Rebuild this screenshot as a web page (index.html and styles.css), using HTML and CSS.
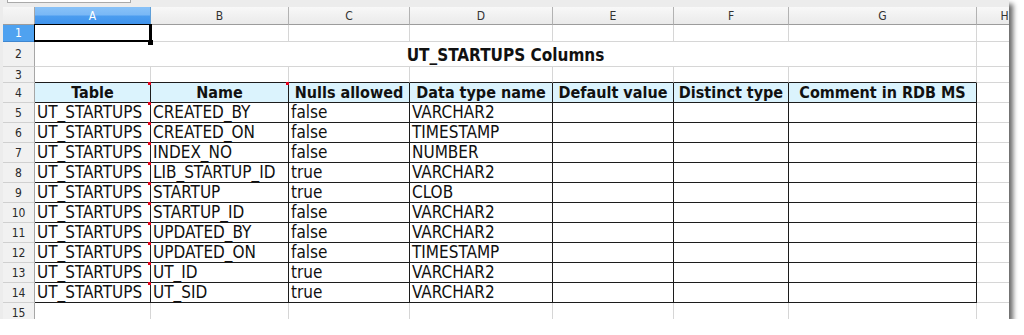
FILE: index.html
```html
<!DOCTYPE html>
<html>
<head>
<meta charset="utf-8">
<link rel="stylesheet" href="styles.css">
</head>
<body>
<div class="window">
  <div class="toolbar"><div class="namebox"></div></div>
  <div class="sheet">
    <div class="corner"></div>
    <div class="ch sel">A</div><div class="ch">B</div><div class="ch">C</div><div class="ch">D</div><div class="ch">E</div><div class="ch">F</div><div class="ch">G</div><div class="ch">H</div>

    <div class="rh sel">1</div>
    <div class="c a1"></div><div class="c"></div><div class="c"></div><div class="c"></div><div class="c"></div><div class="c"></div><div class="c"></div><div class="c"></div>

    <div class="rh">2</div>
    <div class="c title">UT_STARTUPS Columns</div><div class="c"></div>

    <div class="rh">3</div>
    <div class="c above"></div><div class="c above"></div><div class="c above"></div><div class="c above"></div><div class="c above"></div><div class="c above"></div><div class="c above"></div><div class="c"></div>

    <div class="rh">4</div>
    <div class="c t th note">Table</div><div class="c t th note">Name</div><div class="c t th">Nulls allowed</div><div class="c t th">Data type name</div><div class="c t th">Default value</div><div class="c t th">Distinct type</div><div class="c t th">Comment in RDB MS</div><div class="c"></div>

    <div class="rh">5</div>
    <div class="c t note">UT_STARTUPS</div><div class="c t">CREATED_BY</div><div class="c t">false</div><div class="c t">VARCHAR2</div><div class="c t"></div><div class="c t"></div><div class="c t"></div><div class="c"></div>

    <div class="rh">6</div>
    <div class="c t note">UT_STARTUPS</div><div class="c t">CREATED_ON</div><div class="c t">false</div><div class="c t">TIMESTAMP</div><div class="c t"></div><div class="c t"></div><div class="c t"></div><div class="c"></div>

    <div class="rh">7</div>
    <div class="c t note">UT_STARTUPS</div><div class="c t">INDEX_NO</div><div class="c t">false</div><div class="c t">NUMBER</div><div class="c t"></div><div class="c t"></div><div class="c t"></div><div class="c"></div>

    <div class="rh">8</div>
    <div class="c t note">UT_STARTUPS</div><div class="c t">LIB_STARTUP_ID</div><div class="c t">true</div><div class="c t">VARCHAR2</div><div class="c t"></div><div class="c t"></div><div class="c t"></div><div class="c"></div>

    <div class="rh">9</div>
    <div class="c t note">UT_STARTUPS</div><div class="c t">STARTUP</div><div class="c t">true</div><div class="c t">CLOB</div><div class="c t"></div><div class="c t"></div><div class="c t"></div><div class="c"></div>

    <div class="rh">10</div>
    <div class="c t note">UT_STARTUPS</div><div class="c t">STARTUP_ID</div><div class="c t">false</div><div class="c t">VARCHAR2</div><div class="c t"></div><div class="c t"></div><div class="c t"></div><div class="c"></div>

    <div class="rh">11</div>
    <div class="c t note">UT_STARTUPS</div><div class="c t">UPDATED_BY</div><div class="c t">false</div><div class="c t">VARCHAR2</div><div class="c t"></div><div class="c t"></div><div class="c t"></div><div class="c"></div>

    <div class="rh">12</div>
    <div class="c t note">UT_STARTUPS</div><div class="c t">UPDATED_ON</div><div class="c t">false</div><div class="c t">TIMESTAMP</div><div class="c t"></div><div class="c t"></div><div class="c t"></div><div class="c"></div>

    <div class="rh">13</div>
    <div class="c t note">UT_STARTUPS</div><div class="c t">UT_ID</div><div class="c t">true</div><div class="c t">VARCHAR2</div><div class="c t"></div><div class="c t"></div><div class="c t"></div><div class="c"></div>

    <div class="rh">14</div>
    <div class="c t note">UT_STARTUPS</div><div class="c t">UT_SID</div><div class="c t">true</div><div class="c t">VARCHAR2</div><div class="c t"></div><div class="c t"></div><div class="c t"></div><div class="c"></div>

    <div class="rh">15</div>
    <div class="c"></div><div class="c"></div><div class="c"></div><div class="c"></div><div class="c"></div><div class="c"></div><div class="c"></div><div class="c"></div>
  </div>
</div>
</body>
</html>
```

FILE: styles.css
```css
html, body {
  margin: 0;
  padding: 0;
  background: #ffffff;
}

.window {
  width: 1009px;
  height: 319px;
  box-sizing: border-box;
  padding-left: 3px;
  background: #ececec;
  overflow: hidden;
  box-shadow: 4px 4px 5px rgba(0, 0, 0, 0.6);
  font-family: "DejaVu Sans Condensed", "DejaVu Sans", sans-serif;
  font-stretch: condensed;
  color: #111;
}

.toolbar {
  height: 7px;
  padding-left: 4px;
}

.namebox {
  width: 124px;
  height: 3px;
  box-sizing: border-box;
  background: #fff;
  border: 1px solid #a9a9a9;
  border-top: none;
}

.sheet {
  display: grid;
  grid-template-columns: 32px 116px 138px 121px 143px 121px 115px 188px 56px;
  grid-template-rows: 18px 17px 25px 16px repeat(11, 20px) 20px;
  background: #fff;
}

.corner {
  background: linear-gradient(#f6f6f6, #ebebeb);
  border-right: 1px solid #a6a6a6;
  border-bottom: 1px solid #9c9c9c;
  box-sizing: border-box;
}

.ch {
  box-sizing: border-box;
  background: linear-gradient(#f8f8f8, #eaeaea);
  border-right: 1px solid #b2b2b2;
  border-bottom: 1px solid #9c9c9c;
  display: flex;
  align-items: center;
  justify-content: center;
  font-size: 12px;
  color: #333;
}

.ch.sel {
  background: linear-gradient(#88c2f8 0%, #7ab8f6 45%, #4b9cef 55%, #3f93ec 100%);
  border-right-color: #5f9fd8;
  border-bottom-color: #2f6fb5;
  color: #fff;
}

.rh {
  box-sizing: border-box;
  background: #f1f1f1;
  border-right: 1px solid #a6a6a6;
  border-bottom: 1px solid #d0d0d0;
  display: flex;
  align-items: center;
  justify-content: center;
  font-size: 12px;
  color: #2a2a2a;
}

.rh.sel {
  background: #4fa2f0;
  color: #fff;
  border-bottom-color: #3f86cf;
}

.c {
  position: relative;
  box-sizing: border-box;
  border-right: 1px solid #d6d6d6;
  border-bottom: 1px solid #d6d6d6;
  padding: 0 2px 1px;
  display: flex;
  align-items: flex-end;
  font-size: 17px;
  line-height: 17px;
  white-space: nowrap;
}

.c.title {
  grid-column: span 7;
  justify-content: center;
  font-weight: bold;
  padding-bottom: 2px;
}

.c.above {
  border-bottom-color: #1c1c1c;
}

.c.t {
  border-right-color: #1c1c1c;
  border-bottom-color: #1c1c1c;
}

.c.th {
  background: #dbf3fd;
  justify-content: center;
  font-weight: bold;
  font-size: 16px;
}

.c.note::after {
  content: "";
  position: absolute;
  top: -1px;
  right: -1px;
  width: 3px;
  height: 3px;
  background: #e3001b;
  z-index: 2;
}

.c.a1::before {
  content: "";
  position: absolute;
  left: -1px;
  top: -1px;
  right: -2px;
  bottom: -1px;
  border-style: solid;
  border-color: #000;
  border-width: 1px 3px 2px 1px;
  z-index: 2;
}

.c.a1::after {
  content: "";
  position: absolute;
  right: -3px;
  bottom: -4px;
  width: 5px;
  height: 5px;
  background: #000;
  z-index: 3;
}
```
